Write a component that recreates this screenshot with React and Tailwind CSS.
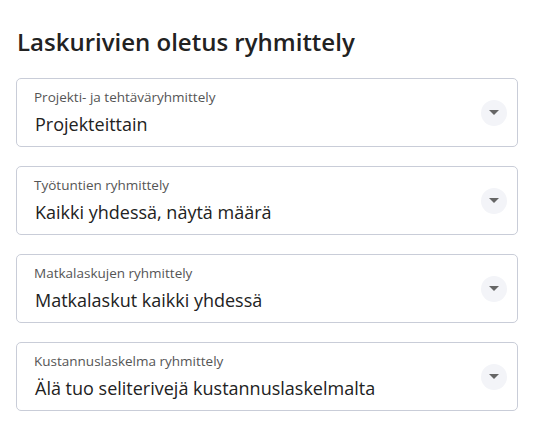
import React from 'react';

const groups = [
  { label: 'Projekti- ja tehtäväryhmittely', value: 'Projekteittain' },
  { label: 'Työtuntien ryhmittely', value: 'Kaikki yhdessä, näytä määrä' },
  { label: 'Matkalaskujen ryhmittely', value: 'Matkalaskut kaikki yhdessä' },
  { label: 'Kustannuslaskelma ryhmittely', value: 'Älä tuo seliterivejä kustannuslaskelmalta' },
];

const SelectField = ({ label, value }) => (
  <div className="flex items-center h-[69px] border border-[#c9cdd8] rounded-[5px] bg-white pl-[17px] pr-[10px]">
    <div className="flex-1 flex flex-col">
      <span className="text-[13.5px] leading-[18px] text-[#555]">{label}</span>
      <span className="mt-[6px] text-[18px] leading-[25px] text-[#222] pl-px">{value}</span>
    </div>
    <button className="w-[26px] h-[26px] rounded-full bg-[#f3f4f8] flex items-center justify-center">
      <svg width="10" height="5" viewBox="0 0 10 5">
        <path d="M0 0h10L5 5z" fill="#666" />
      </svg>
    </button>
  </div>
);

export default function App() {
  return (
    <div className="bg-white px-4 pt-[26px] pb-4" style={{ fontFamily: '"Open Sans", sans-serif' }}>
      <h2 className="text-[24px] leading-[32px] font-semibold text-[#222] pl-px mb-[20px]">
        Laskurivien oletus ryhmittely
      </h2>
      <div className="flex flex-col gap-[19px] w-[502px]">
        {groups.map((g) => (
          <SelectField key={g.label} label={g.label} value={g.value} />
        ))}
      </div>
    </div>
  );
}
